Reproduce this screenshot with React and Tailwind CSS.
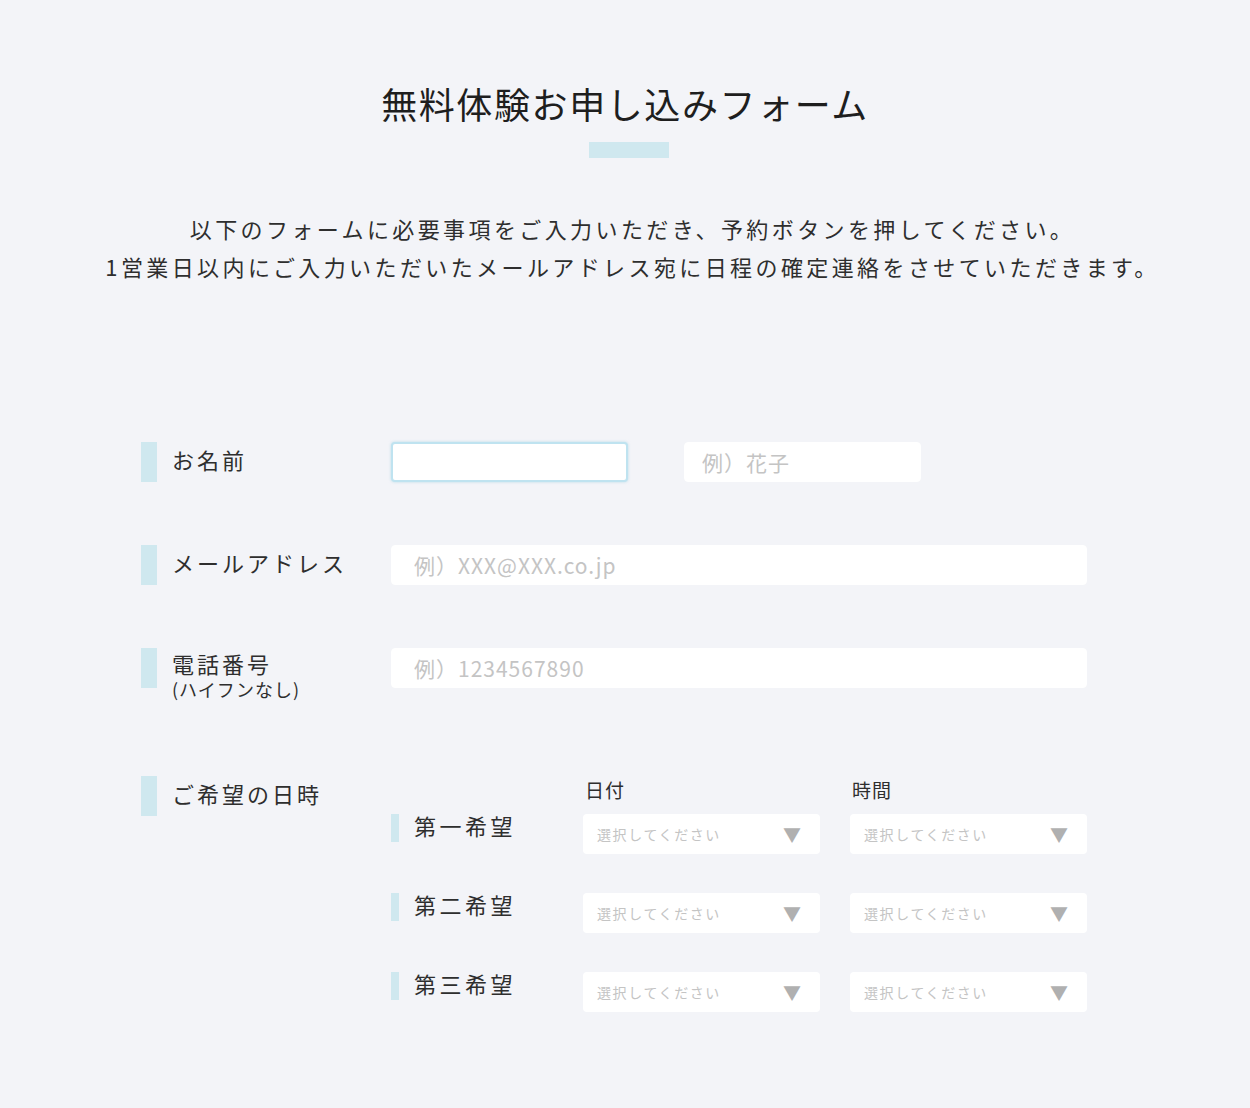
import { useState } from "react";

const FONT = "font-['Noto_Sans_CJK_JP','Noto_Sans',sans-serif]";

function LabelBar({ children, sub }) {
  return (
    <div className="flex items-start gap-[15px]">
      <span className="block w-[16px] h-[40px] shrink-0 bg-[#cfe8ef]" />
      <div>
        <p className={`text-[22px] tracking-[3px] text-[#2e2e2e] ${sub ? "leading-[30px]" : "leading-[34px]"}`}>{children}</p>
        {sub && <p className="text-[18px] leading-[22px] tracking-[1px] text-[#2e2e2e]">{sub}</p>}
      </div>
    </div>
  );
}

function TextInput({ placeholder, focused, width, pad = "px-[22px]" }) {
  return (
    <input
      type="text"
      placeholder={placeholder}
      className={`h-[40px] rounded-[4px] bg-white ${pad} ${width} text-[21px] tracking-[1px] text-[#333] placeholder:text-[#c4c4c4] outline-none ${
        focused ? "border-2 border-[#bfe3f0] shadow-[0_0_3px_rgba(150,205,225,0.6)]" : "border border-white"
      }`}
    />
  );
}

function FakeSelect() {
  return (
    <div className="flex h-[40px] w-[237px] items-center justify-between rounded-[4px] bg-white pl-[14px] pr-[19px]">
      <span className="text-[14px] tracking-[1.6px] text-[#c4c4c4]">選択してください</span>
      <span className="text-[18px] leading-none text-[#b0b0b0]">▼</span>
    </div>
  );
}

function ChoiceRow({ label }) {
  return (
    <div className="flex items-start">
      <div className="flex w-[192px] items-start gap-[15px]">
        <span className="block w-[8px] h-[28px] bg-[#cfe8ef]" />
        <span className="-mt-[3px] text-[22px] leading-[28px] tracking-[3.5px] text-[#2e2e2e]">{label}</span>
      </div>
      <div className="flex gap-[30px]">
        <FakeSelect />
        <FakeSelect />
      </div>
    </div>
  );
}

export default function App() {
  const [choices] = useState(["第一希望", "第二希望", "第三希望"]);

  return (
    <main className={`min-h-[1108px] w-full bg-[#f3f4f8] ${FONT}`}>
      <div className="mx-auto w-[1250px] pt-[76px]">
        <h1 className="text-center text-[36px] leading-[54px] tracking-[1.6px] text-[#1e1e1e]">
          無料体験お申し込みフォーム
        </h1>
        <div className="ml-[589px] mt-[12px] h-[16px] w-[80px] bg-[#cfe8ef]" />

        <div className="mt-[51px] pl-[15px] text-center text-[22px] leading-[38px] tracking-[3.4px] text-[#2e2e2e]">
          <p>以下のフォームに必要事項をご入力いただき、予約ボタンを押してください。</p>
          <p>1営業日以内にご入力いただいたメールアドレス宛に日程の確定連絡をさせていただきます。</p>
        </div>

        <div className="ml-[141px] mt-[157px] w-[946px]">
          <div className="grid grid-cols-[250px_1fr] items-start">
            <LabelBar>お名前</LabelBar>
            <div className="flex gap-[56px]">
              <TextInput focused width="w-[237px]" />
              <TextInput placeholder="例）花子" width="w-[237px]" pad="px-[17px]" />
            </div>
          </div>

          <div className="mt-[63px] grid grid-cols-[250px_1fr] items-start">
            <LabelBar>メールアドレス</LabelBar>
            <TextInput placeholder="例）XXX@XXX.co.jp" width="w-[696px]" />
          </div>

          <div className="mt-[63px] grid grid-cols-[250px_1fr] items-start">
            <LabelBar sub="(ハイフンなし)">電話番号</LabelBar>
            <TextInput placeholder="例）1234567890" width="w-[696px]" />
          </div>

          <div className="mt-[76px] grid grid-cols-[250px_1fr] items-start">
            <LabelBar>ご希望の日時</LabelBar>
            <div>
              <div className="flex h-[38px] items-start pl-[194px] text-[19px] leading-[28px] tracking-[1px] text-[#2e2e2e]">
                <span className="w-[267px]">日付</span>
                <span>時間</span>
              </div>
              <div className="flex flex-col gap-[39px]">
                {choices.map(c => (
                  <ChoiceRow key={c} label={c} />
                ))}
              </div>
            </div>
          </div>
        </div>
      </div>
    </main>
  );
}
